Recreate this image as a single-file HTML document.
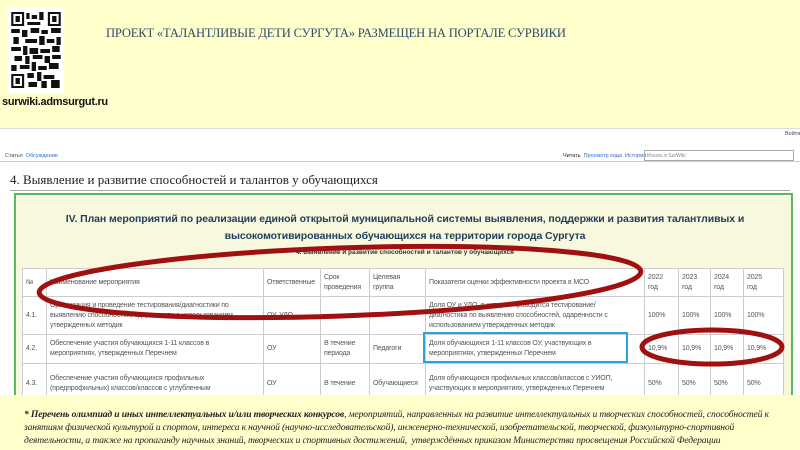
<!DOCTYPE html>
<html><head><meta charset="utf-8"><style>
*{margin:0;padding:0;box-sizing:border-box}
body{width:800px;height:450px;background:#ffffcc;position:relative;overflow:hidden;font-family:"Liberation Sans",sans-serif}
.abs{position:absolute}
.qr{left:8px;top:8px;width:56px;height:85px;background:#fff}
.title{left:106px;top:26px;font-family:"Liberation Serif",serif;font-size:12.6px;color:#2f4a6a;letter-spacing:-0.2px}
.url{left:2px;top:96px;font-size:11px;font-weight:bold;color:#111;letter-spacing:-0.3px}
.shot{left:0;top:128px;width:800px;height:267px;background:#fff;border-top:1px solid #ddd}
.tabs{font-size:5.5px;color:#446}
.h4{left:10px;top:172px;font-family:"Liberation Serif",serif;font-size:13px;color:#222}
.hr{left:10px;top:190px;width:780px;height:1px;background:#aaa}
.box{left:14px;top:193px;width:779px;height:210px;background:#f8f8de;border:2px solid #5cb85c}
.h1{left:20px;top:211px;width:770px;text-align:center;font-size:10.5px;font-weight:bold;color:#23405a;line-height:17px;letter-spacing:-0.1px}
.h2{left:20px;top:249px;width:770px;text-align:center;font-size:6.5px;color:#333;font-weight:bold}
table{position:absolute;left:22px;top:268px;border-collapse:collapse;background:#fff;font-size:7px;color:#555;letter-spacing:-0.15px}
td{border:1px solid #ccc;padding:1px 3px;vertical-align:middle;line-height:10px}
.foot{left:24px;top:408px;width:770px;font-family:"Liberation Serif",serif;font-style:italic;font-size:9.6px;line-height:13px;color:#222;letter-spacing:-0.15px}
</style></head><body>
<div class="abs qr">
<svg width="56" height="85" viewBox="0 0 52 85" preserveAspectRatio="none">
<g fill="#111">
<rect x="3" y="4" width="12" height="14"/><rect x="5" y="6" width="8" height="10" fill="#fff"/><rect x="7" y="8" width="4" height="6"/>
<rect x="37" y="4" width="12" height="14"/><rect x="39" y="6" width="8" height="10" fill="#fff"/><rect x="41" y="8" width="4" height="6"/>
<rect x="3" y="66" width="12" height="14"/><rect x="5" y="68" width="8" height="10" fill="#fff"/><rect x="7" y="70" width="4" height="6"/>
<rect x="17" y="5" width="3" height="6"/><rect x="22" y="7" width="5" height="4"/><rect x="29" y="4" width="4" height="8"/><rect x="18" y="14" width="12" height="3"/>
<rect x="3" y="21" width="8" height="4"/><rect x="13" y="22" width="5" height="7"/><rect x="21" y="20" width="8" height="5"/><rect x="31" y="22" width="6" height="4"/><rect x="40" y="20" width="9" height="5"/>
<rect x="5" y="29" width="5" height="7"/><rect x="16" y="31" width="11" height="4"/><rect x="29" y="28" width="5" height="9"/><rect x="36" y="31" width="7" height="4"/><rect x="45" y="29" width="4" height="8"/>
<rect x="3" y="39" width="9" height="4"/><rect x="14" y="38" width="4" height="9"/><rect x="20" y="40" width="8" height="6"/><rect x="30" y="41" width="9" height="4"/><rect x="41" y="38" width="7" height="6"/>
<rect x="6" y="48" width="7" height="5"/><rect x="16" y="48" width="4" height="8"/><rect x="23" y="47" width="9" height="4"/><rect x="34" y="48" width="5" height="7"/><rect x="41" y="47" width="8" height="4"/>
<rect x="3" y="57" width="5" height="6"/><rect x="11" y="57" width="9" height="4"/><rect x="22" y="54" width="4" height="9"/><rect x="28" y="58" width="8" height="4"/><rect x="38" y="55" width="9" height="6"/>
<rect x="18" y="65" width="6" height="5"/><rect x="27" y="64" width="4" height="9"/><rect x="33" y="67" width="10" height="4"/><rect x="19" y="74" width="8" height="5"/><rect x="31" y="73" width="5" height="7"/><rect x="40" y="72" width="8" height="8"/>
</g></svg></div>
<div class="abs title">ПРОЕКТ «ТАЛАНТЛИВЫЕ ДЕТИ СУРГУТА» РАЗМЕЩЕН НА ПОРТАЛЕ СУРВИКИ</div>
<div class="abs url">surwiki.admsurgut.ru</div>
<div class="abs shot"></div>
<div class="abs tabs" style="left:785px;top:131px">Войти</div>
<div class="abs tabs" style="left:5px;top:153px">Статья &nbsp;<span style="color:#36c">Обсуждение</span></div>
<div class="abs tabs" style="left:563px;top:153px;color:#222">Читать &nbsp;<span style="color:#36c">Просмотр кода &nbsp;История</span></div>
<div class="abs" style="left:644px;top:150px;width:150px;height:11px;border:1px solid #aaa;font-size:5px;color:#888;padding:2px">Искать в SurWiki</div>
<div class="abs" style="left:0;top:161px;width:800px;height:1px;background:#ccc"></div>
<div class="abs h4">4. Выявление и развитие способностей и талантов у обучающихся</div>
<div class="abs hr"></div>
<div class="abs box"></div>
<div class="abs h1">IV. План мероприятий по реализации единой открытой муниципальной системы выявления, поддержки и развития талантливых и<br>высокомотивированных обучающихся на территории города Сургута</div>
<div class="abs h2">4. Выявление и развитие способностей и талантов у обучающихся</div>
<table>
<tr style="height:28px"><td style="width:24px">№</td><td style="width:217px">Наименование мероприятия</td><td style="width:57px">Ответственные</td><td style="width:49px">Срок<br>проведения</td><td style="width:56px">Целевая<br>группа</td><td style="width:219px">Показатели оценки эффективности проекта в МСО</td><td style="width:34px">2022<br>год</td><td style="width:32px">2023<br>год</td><td style="width:33px">2024<br>год</td><td style="width:40px">2025<br>год</td></tr>
<tr style="height:38px"><td>4.1.</td><td>Организация и проведение тестирования/диагностики по<br>выявлению способностей, одаренности с использованием<br>утвержденных методик</td><td>ОУ, УДО</td><td></td><td></td><td>Доля ОУ и УДО, в которых проводится тестирование/<br>диагностика по выявлению способностей, одаренности с<br>использованием утвержденных методик</td><td>100%</td><td>100%</td><td>100%</td><td>100%</td></tr>
<tr style="height:29px"><td>4.2.</td><td>Обеспечение участия обучающихся 1-11 классов в<br>мероприятиях, утвержденных Перечнем</td><td>ОУ</td><td>В течение<br>периода</td><td>Педагоги</td><td>Доля обучающихся 1-11 классов ОУ, участвующих в<br>мероприятиях, утвержденных Перечнем</td><td>10,9%</td><td>10,9%</td><td>10,9%</td><td>10,9%</td></tr>
<tr style="height:40px"><td>4.3.</td><td>Обеспечение участия обучающихся профильных<br>(предпрофильных) классов/классов с углубленным</td><td>ОУ</td><td>В течение</td><td>Обучающиеся</td><td>Доля обучающихся профильных классов/классов с УИОП,<br>участвующих в мероприятиях, утвержденных Перечнем</td><td>50%</td><td>50%</td><td>50%</td><td>50%</td></tr>
</table>
<div class="abs" style="left:0;top:395px;width:800px;height:55px;background:#ffffcc"></div>
<svg class="abs" style="left:0;top:0" width="800" height="450">
<rect x="424" y="333" width="203" height="29" fill="none" stroke="#29a3d8" stroke-width="2"/>
<ellipse cx="340" cy="282" rx="301" ry="34" fill="none" stroke="#a01010" stroke-width="5" transform="rotate(-2 340 282)"/>
<ellipse cx="712" cy="347" rx="70" ry="17" fill="none" stroke="#a01010" stroke-width="5"/>
</svg>
<div class="abs foot"><b>* Перечень олимпиад и иных интеллектуальных и/или творческих конкурсов</b>, мероприятий, направленных на развитие интеллектуальных и творческих способностей, способностей к занятиям физической культурой и спортом, интереса к научной (научно-исследовательской), инженерно-технической, изобретательской, творческой, физкультурно-спортивной деятельности, а также на пропаганду научных знаний, творческих и спортивных достижений, &nbsp;утверждённых приказом Министерства просвещения Российской Федерации</div>
</body></html>
